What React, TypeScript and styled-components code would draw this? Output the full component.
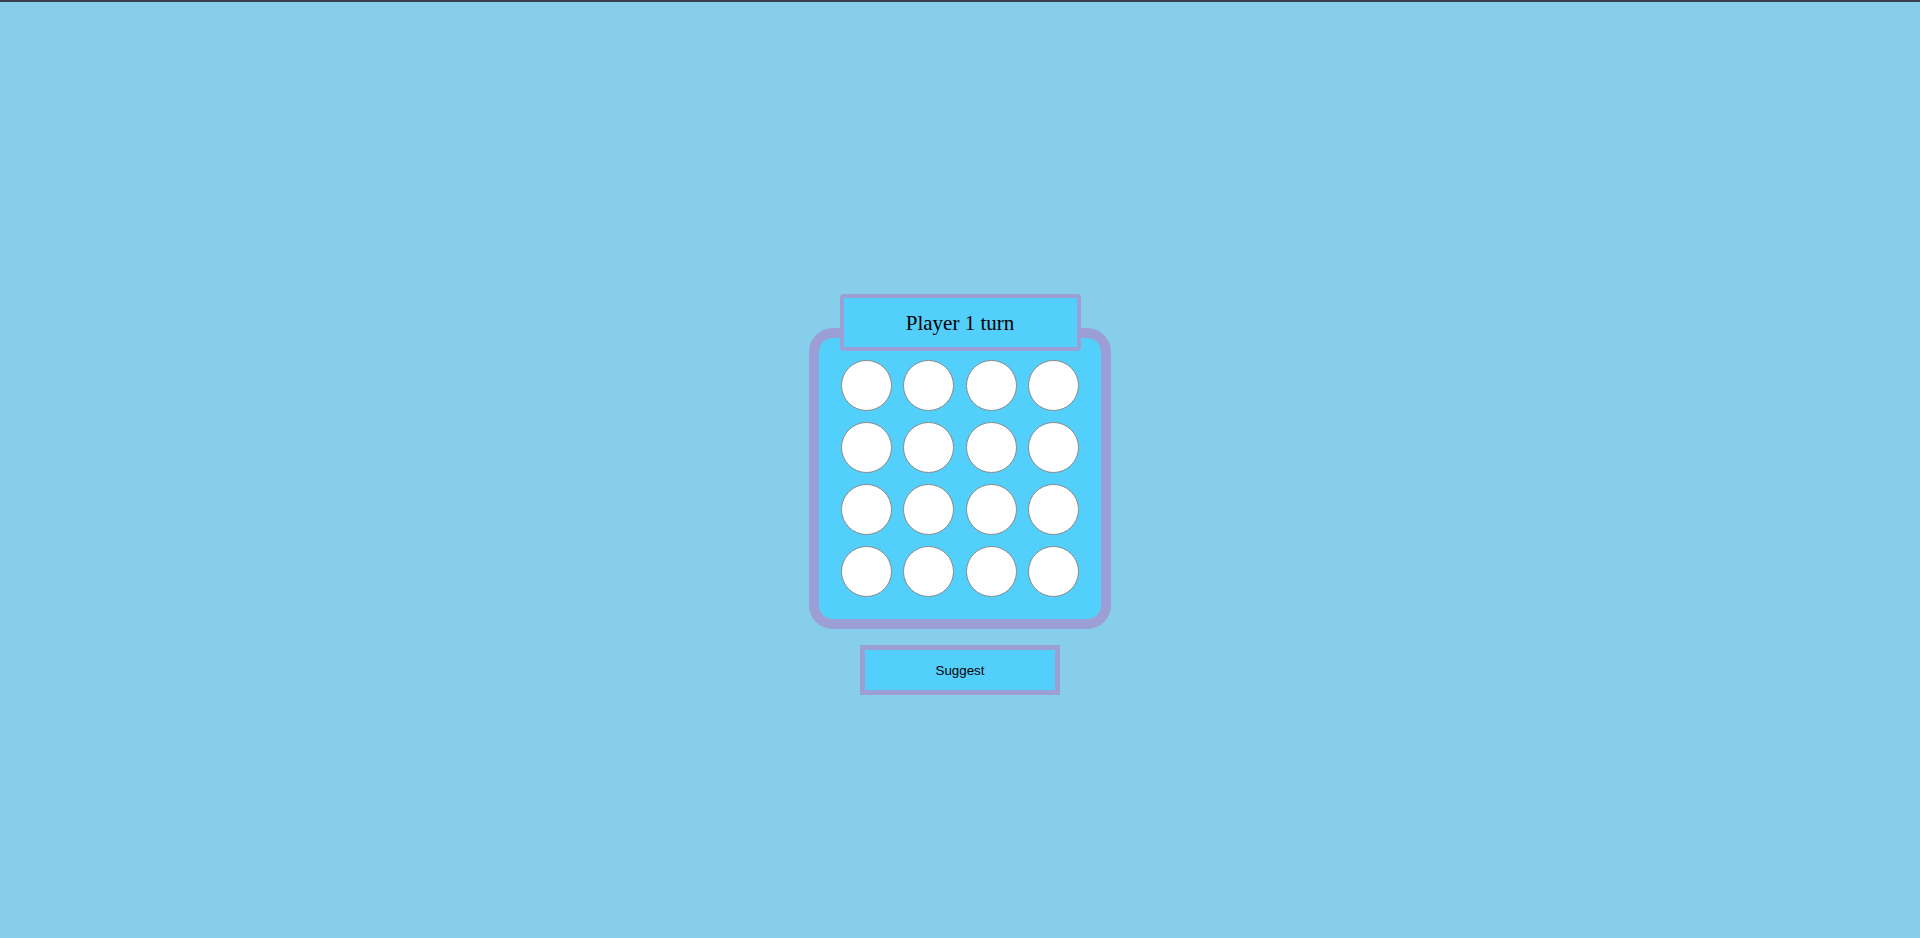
import React from "react";
import styled, { createGlobalStyle } from "styled-components";

const Global = createGlobalStyle`
  html, body { margin: 0; padding: 0; }
  body {
    background: #87ceeb;
    font-family: "Liberation Serif", serif;
    min-height: 938px;
  }
`;

const TopBar = styled.div`
  height: 2px;
  background: #3c3f50;
`;

const Page = styled.main`
  display: flex;
  flex-direction: column;
  align-items: center;
  padding-top: 292px;
`;

const Header = styled.div`
  position: relative;
  z-index: 2;
  box-sizing: border-box;
  width: 241px;
  height: 57px;
  margin-bottom: -23px;
  padding-top: 2px;
  background: #52d0fb;
  border: 4px solid #9c9ed6;
  border-radius: 4px;
  display: flex;
  align-items: center;
  justify-content: center;
  font-family: "Liberation Serif", serif;
  font-size: 21px;
  color: #000;
`;

const Board = styled.div`
  box-sizing: border-box;
  width: 302px;
  height: 301px;
  background: #52d0fb;
  border: 10px solid #9c9ed6;
  border-radius: 24px;
  padding: 22px 21.5px;
  display: grid;
  grid-template-columns: repeat(4, 51px);
  grid-auto-rows: 51px;
  column-gap: 11.67px;
  row-gap: 11px;
`;

const Cell = styled.div`
  box-sizing: border-box;
  width: 51px;
  height: 51px;
  border-radius: 50%;
  background: #fff;
  border: 1px solid #8a8a8a;
`;

const SuggestButton = styled.button`
  box-sizing: border-box;
  margin-top: 16px;
  width: 200px;
  height: 50px;
  background: #52d0fb;
  border: 5px solid #9c9ed6;
  border-radius: 0;
  font-family: "Liberation Sans", Arial, sans-serif;
  font-size: 13.333px;
  color: #000;
  cursor: pointer;
`;

export default function App() {
  const cells = Array.from({ length: 16 }, (_, i) => i);
  return (
    <>
      <Global />
      <TopBar />
      <Page>
        <Header>Player 1 turn</Header>
        <Board>
          {cells.map((i) => (
            <Cell key={i} />
          ))}
        </Board>
        <SuggestButton>Suggest</SuggestButton>
      </Page>
    </>
  );
}
